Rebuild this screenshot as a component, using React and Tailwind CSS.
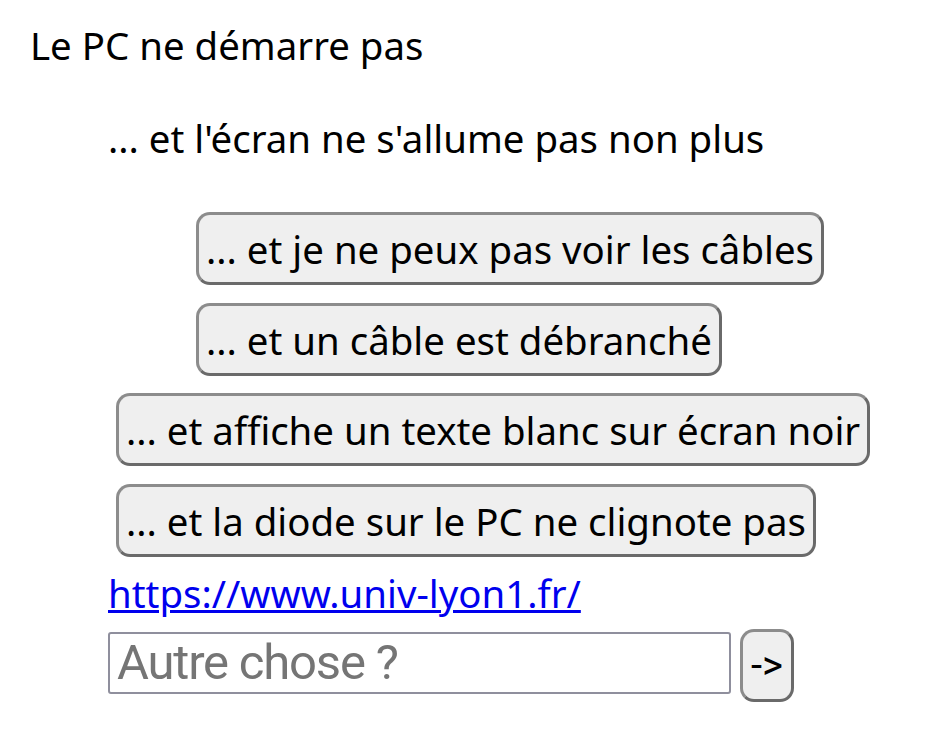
import React from "react";

const btn =
  "rounded-[14px] border-[3px] border-t-[#8c8c8c] border-l-[#8c8c8c] border-r-[#6a6a6a] border-b-[#6a6a6a] bg-[#efefef] text-black text-[38.4px] leading-[52px] pl-[7px] pr-[7px] pt-[8px] pb-[7px] whitespace-nowrap font-['Noto_Sans',sans-serif]";

export default function App() {
  return (
    <div className="min-h-[744px] bg-white text-black font-['Noto_Sans',sans-serif]">
      <div className="pt-[19px] pl-[30px] text-[38.4px] leading-[52px]">Le PC ne démarre pas</div>
      <div className="mt-[41px] pl-[108px] flex flex-col items-start">
        <div className="text-[38.4px] leading-[52px]">... et l'écran ne s'allume pas non plus</div>
        <div className="mt-[48px] flex flex-col items-start">
          <button className={btn + " ml-[88px]"}>... et je ne peux pas voir les câbles</button>
          <button className={btn + " ml-[88px] mt-[18px]"}>... et un câble est débranché</button>
          <button className={btn + " ml-[8px] mt-[17px]"}>... et affiche un texte blanc sur écran noir</button>
          <button className={btn + " ml-[8px] mt-[18px]"}>... et la diode sur le PC ne clignote pas</button>
        </div>
        <a
          href="#"
          className="mt-[10px] text-[#0000ee] underline text-[38.4px] leading-[52px]"
        >
          https://www.univ-lyon1.fr/
        </a>
        <div className="mt-[10px] flex items-start gap-[9px]">
          <input
            placeholder="Autre chose ?"
            className="mt-[3px] w-[623px] h-[62px] border-2 border-[#8f8f9d] rounded-[3px] px-[7px] text-[49px] tracking-[-1.2px] font-['Roboto',sans-serif] placeholder:text-[#757575] outline-none"
          />
          <button className="w-[54px] h-[73px] rounded-[14px] border-[3px] border-t-[#8c8c8c] border-l-[#8c8c8c] border-r-[#6a6a6a] border-b-[#6a6a6a] bg-[#efefef] text-black text-[40px] leading-none font-['Roboto',sans-serif]">
            -&gt;
          </button>
        </div>
      </div>
    </div>
  );
}
